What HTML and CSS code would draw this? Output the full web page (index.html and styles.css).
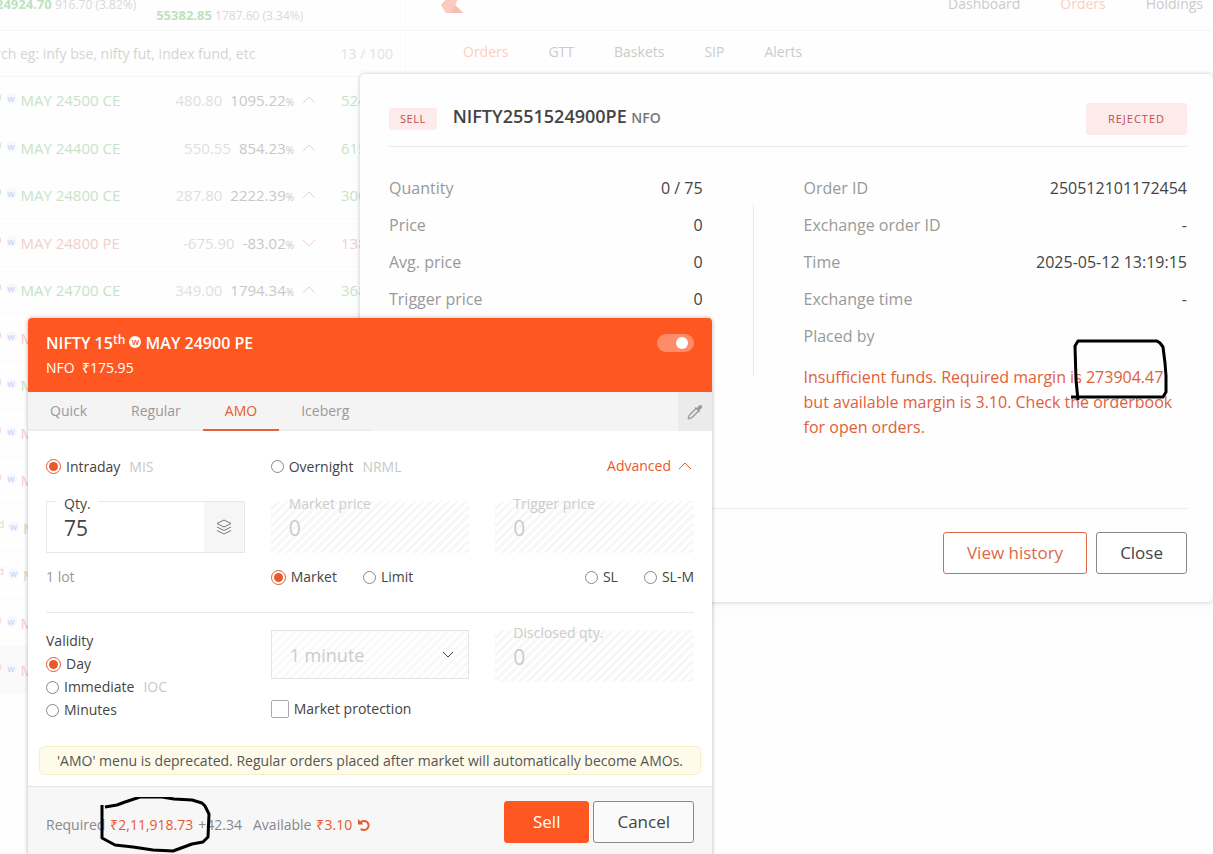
FILE: index.html
```html
<!DOCTYPE html>
<html lang="en">
<head>
    <meta charset="UTF-8">
    <meta name="viewport" content="width=device-width, initial-scale=1.0">
    <title>Orders</title>
    <link rel="stylesheet" href="styles.css">
</head>
<body>
    <div class="app">
        <aside class="sidebar">
            <div class="indices">
                <div class="index"><strong>24924.70</strong> <span>916.70 (3.82%)</span></div>
                <div class="index second"><strong>55382.85</strong> <span>1787.60 (3.34%)</span></div>
            </div>
            <div class="search">
                <input type="text" aria-label="Search" placeholder="Search eg: infy bse, nifty fut, index fund, etc">
                <span>13 / 100</span>
            </div>
            <ul class="watchlist">
                <li class="up">
                    <span class="name">NIFTY 15<sup>th</sup> <i>w</i> MAY 24500 CE</span>
                    <span class="change">480.80</span><span class="percent">1095.22<small>%</small></span>
                    <svg class="chevron" viewBox="0 0 14 8"><path d="M1 7l6-6 6 6"/></svg>
                    <span class="ltp">524</span>
                </li>
                <li class="up">
                    <span class="name">NIFTY 15<sup>th</sup> <i>w</i> MAY 24400 CE</span>
                    <span class="change">550.55</span><span class="percent">854.23<small>%</small></span>
                    <svg class="chevron" viewBox="0 0 14 8"><path d="M1 7l6-6 6 6"/></svg>
                    <span class="ltp">615</span>
                </li>
                <li class="up">
                    <span class="name">NIFTY 15<sup>th</sup> <i>w</i> MAY 24800 CE</span>
                    <span class="change">287.80</span><span class="percent">2222.39<small>%</small></span>
                    <svg class="chevron" viewBox="0 0 14 8"><path d="M1 7l6-6 6 6"/></svg>
                    <span class="ltp">300</span>
                </li>
                <li class="down">
                    <span class="name">NIFTY 15<sup>th</sup> <i>w</i> MAY 24800 PE</span>
                    <span class="change">-675.90</span><span class="percent">-83.02<small>%</small></span>
                    <svg class="chevron" viewBox="0 0 14 8"><path d="M1 1l6 6 6-6"/></svg>
                    <span class="ltp">138</span>
                </li>
                <li class="up">
                    <span class="name">NIFTY 15<sup>th</sup> <i>w</i> MAY 24700 CE</span>
                    <span class="change">349.00</span><span class="percent">1794.34<small>%</small></span>
                    <svg class="chevron" viewBox="0 0 14 8"><path d="M1 7l6-6 6 6"/></svg>
                    <span class="ltp">368</span>
                </li>
                <li class="down"><span class="name">NIFTY 15<sup>th</sup> <i>w</i> MAY</span></li>
                <li class="up"><span class="name">NIFTY 15<sup>th</sup> <i>w</i> MAY</span></li>
                <li class="down"><span class="name">NIFTY 15<sup>th</sup> <i>w</i> MAY</span></li>
                <li class="down"><span class="name">NIFTY 15<sup>th</sup> <i>w</i> MAY</span></li>
                <li class="up"><span class="name">NIFTY 22<sup>nd</sup> <i>w</i> MAY</span></li>
                <li class="down"><span class="name">NIFTY 22<sup>nd</sup> <i>w</i> MAY</span></li>
                <li class="down"><span class="name">NIFTY 15<sup>th</sup> <i>w</i> MAY</span></li>
                <li class="down selected"><span class="name">NIFTY 15<sup>th</sup> <i>w</i> MAY</span></li>
            </ul>
        </aside>
        <main class="main">
            <header class="topbar">
                <svg class="logo" width="24" height="24" viewBox="0 0 24 24">
                    <path d="M8 8h11l-4 8 8 8H6l-5-8z" fill="#fcc9bf"/>
                    <path d="M15 16l8 8H11z" fill="#f9bcb4"/>
                </svg>
                <nav>
                    <a href="#">Dashboard</a>
                    <a href="#" class="active">Orders</a>
                    <a href="#">Holdings</a>
                </nav>
            </header>
            <nav class="subnav">
                <a href="#" class="active">Orders</a>
                <a href="#">GTT</a>
                <a href="#">Baskets</a>
                <a href="#">SIP</a>
                <a href="#">Alerts</a>
            </nav>
        </main>
    </div>

    <section class="modal">
        <header class="modal-header">
            <span class="tag">SELL</span>
            <h2>NIFTY2551524900PE <small>NFO</small></h2>
            <span class="status">REJECTED</span>
        </header>
        <div class="details">
            <dl>
                <div><dt>Quantity</dt><dd>0 / 75</dd></div>
                <div><dt>Price</dt><dd>0</dd></div>
                <div><dt>Avg. price</dt><dd>0</dd></div>
                <div><dt>Trigger price</dt><dd>0</dd></div>
            </dl>
            <div class="separator"></div>
            <div>
                <dl>
                    <div><dt>Order ID</dt><dd>250512101172454</dd></div>
                    <div><dt>Exchange order ID</dt><dd>-</dd></div>
                    <div><dt>Time</dt><dd>2025-05-12 13:19:15</dd></div>
                    <div><dt>Exchange time</dt><dd>-</dd></div>
                    <div><dt>Placed by</dt><dd></dd></div>
                </dl>
                <p class="message">Insufficient funds. Required margin is 273904.47 but available margin is 3.10. Check the orderbook for open orders.</p>
            </div>
        </div>
        <footer class="modal-footer">
            <button type="button" class="btn btn-outline-orange">View history</button>
            <button type="button" class="btn">Close</button>
        </footer>
    </section>

    <form class="order-window">
        <header class="order-header">
            <div>
                <h1>NIFTY 15<sup>th</sup> <i>w</i> MAY 24900 PE</h1>
                <p>NFO&nbsp; ₹175.95</p>
            </div>
            <input type="checkbox" class="toggle" aria-label="Sell" checked>
        </header>
        <div class="tabs">
            <button type="button">Quick</button>
            <button type="button">Regular</button>
            <button type="button" class="active">AMO</button>
            <button type="button">Iceberg</button>
            <button type="button" class="picker" aria-label="Pick">
                <svg width="16" height="16" viewBox="0 0 16 16">
                    <path d="M9 4.500L2.500 11c-.6.700-.5 1.600-1 2.500l-.3.800.6.500.8-.3c.900-.5 1.700-.4 2.400-1L11.500 7" fill="none" stroke="#999" stroke-width="1.300"/>
                    <path d="M7.800 4l1-1 1.100.9 1.900-2.200c.8-.9 2-.9 2.800-.2.800.8.800 2-.1 2.800L12.300 6.200l.9 1.100-1 1z" fill="#999"/>
                </svg>
            </button>
        </div>

        <div class="order-body">
            <div class="grid">
                <label class="option"><input type="radio" name="product" checked> Intraday <span>MIS</span></label>
                <label class="option"><input type="radio" name="product"> Overnight <span>NRML</span></label>
                <a href="#" class="advanced">Advanced <svg width="14" height="8" viewBox="0 0 14 8"><path d="M1 7l6-6 6 6"/></svg></a>
            </div>
            <div class="grid fields">
                <div class="field">
                    <label for="qty">Qty.</label>
                    <input type="text" id="qty" value="75">
                    <button type="button" class="lots" aria-label="Lots">
                        <svg width="16" height="16" viewBox="0 0 16 16">
                            <path d="M8 1l7 3.500L8 8 1 4.500zM1 8l7 3.500L15 8M1 11.500L8 15l7-3.500"/>
                        </svg>
                    </button>
                </div>
                <div class="field disabled">
                    <label for="price">Market price</label>
                    <input type="text" id="price" value="0" disabled>
                </div>
                <div class="field disabled">
                    <label for="trigger">Trigger price</label>
                    <input type="text" id="trigger" value="0" disabled>
                </div>
            </div>
            <div class="grid types">
                <span class="lot">1 lot</span>
                <div class="options">
                    <label class="option"><input type="radio" name="type" checked> Market</label>
                    <label class="option"><input type="radio" name="type"> Limit</label>
                </div>
                <div class="options right">
                    <label class="option"><input type="radio" name="trigger-type"> SL</label>
                    <label class="option"><input type="radio" name="trigger-type"> SL-M</label>
                </div>
            </div>
            <div class="grid more">
                <div class="validity">
                    <span>Validity</span>
                    <label class="option"><input type="radio" name="validity" checked> Day</label>
                    <label class="option"><input type="radio" name="validity"> Immediate <span>IOC</span></label>
                    <label class="option"><input type="radio" name="validity"> Minutes</label>
                </div>
                <div class="protection">
                    <div class="select">
                        <select aria-label="Minutes" disabled><option>1 minute</option></select>
                        <svg width="12" height="8" viewBox="0 0 12 8"><path d="M1 1l5 5 5-5"/></svg>
                    </div>
                    <label class="check"><input type="checkbox"> Market protection</label>
                </div>
                <div class="field disabled">
                    <label for="disclosed">Disclosed qty.</label>
                    <input type="text" id="disclosed" value="0" disabled>
                </div>
            </div>
            <p class="notice">'AMO' menu is deprecated. Regular orders placed after market will automatically become AMOs.</p>
        </div>

        <footer class="order-footer">
            <div class="margins">
                <span>Required</span>
                <span class="orange">₹2,11,918.73</span>
                <span>+42.34</span>
                <span class="available">Available</span>
                <span class="orange">₹3.10</span>
                <button type="button" class="reload" aria-label="Refresh">
                    <svg width="14" height="14" viewBox="0 0 14 14">
                        <path d="M3.500 4.500a4.600 4.600 0 1 1 .3 6.300" fill="none" stroke="#e8592e" stroke-width="2"/>
                        <path d="M1 1v5.500h5.500z" fill="#e8592e"/>
                    </svg>
                </button>
            </div>
            <button type="submit" class="btn btn-sell">Sell</button>
            <button type="button" class="btn">Cancel</button>
        </footer>
    </form>

    <!-- pen marks -->
    <svg class="pen pen-message" width="104" height="68" viewBox="0 0 104 68">
        <path d="M10 64L8 44 7 10l3-5h79l3 2 3 4 2 16 1 13v16l-3 5H3"/>
    </svg>
    <svg class="pen pen-required" width="114" height="57" viewBox="0 0 114 57">
        <path d="M3 8v33l13 7 18 2 20 3 20 1 19-7 11-2 5-5 1-23-4-8-3-3-10-3-18-1-12-2H41l-15 5-8 3-12 2"/>
    </svg>
</body>
</html>
```
FILE: styles.css
```css
* {
    box-sizing: border-box;
}

body {
    position: relative;
    margin: 0;
    min-height: 100vh;
    overflow: hidden;
    font-family: "Open Sans", sans-serif;
    font-size: 14px;
    color: #444;
    background-color: #fefefe;
}

h1, h2, p, ul, dl, dd {
    margin: 0;
    padding: 0;
}

a {
    text-decoration: none;
    color: inherit;
}

button, input, select {
    font: inherit;
    color: inherit;
}

button {
    padding: 0;
    border: none;
    background: none;
    cursor: pointer;
}

svg {
    display: block;
}

/* page behind the dialogs */
.app {
    display: flex;
    margin: -23px 0 0 -80px;
}

.sidebar {
    width: 486px;
    border-right: 1px solid #f9f9f9;
}

.indices {
    display: flex;
    gap: 20px;
    height: 54px;
    padding-left: 76px;
    align-items: center;
    border-bottom: 1px solid #f5f5f5;
    white-space: nowrap;
    font-size: 12px;
    color: #d9d9d9;
}

.index strong {
    font-size: 13px;
    color: #bce3bd;
}

.second {
    padding-top: 22px;
}

.search {
    display: flex;
    height: 46px;
    align-items: center;
    padding: 0 12px 0 52px;
    border-bottom: 1px solid #f7f7f7;
    color: #e3e3e3;
}

.search input {
    flex: 1;
    padding: 0;
    border: none;
    background: none;
}

.search input::placeholder {
    color: #d4d4d4;
}

.watchlist {
    list-style: none;
    font-size: 15px;
}

.watchlist li {
    display: flex;
    height: 47px;
    align-items: center;
    gap: 8px;
    padding-left: 11px;
    border-bottom: 1px solid #fafafa;
    white-space: nowrap;
}

.watchlist li:nth-child(even) {
    height: 48px;
}

.watchlist .selected {
    background-color: #fafafa;
}

.name {
    flex: 1;
}

.name sup {
    font-size: 10px;
    line-height: 1;
}

.name i {
    display: inline-block;
    width: 11px;
    border-radius: 50%;
    background-color: #f7f8ff;
    font-size: 9px;
    line-height: 11px;
    font-style: normal;
    text-align: center;
    vertical-align: 4px;
    color: #c3caf5;
}

.change {
    color: #dedede;
}

.percent {
    color: #c8c8c8;
}

.percent small {
    font-size: 10px;
}

.chevron {
    width: 14px;
    height: 8px;
    fill: none;
    stroke: currentColor;
}

.ltp {
    width: 64px;
    padding-left: 17px;
    box-sizing: content-box;
}

.up {
    color: #c8e2c8;
}

.down {
    color: #f1cfcd;
}

.main {
    flex: 1;
    color: #cbcbcb;
}

.topbar {
    display: flex;
    height: 54px;
    align-items: center;
    justify-content: space-between;
    padding: 0 10px 0 34px;
    border-bottom: 1px solid #f5f5f5;
}

.logo {
    margin-bottom: 6px;
}

.topbar nav {
    display: flex;
    gap: 40px;
}

.subnav {
    display: flex;
    gap: 40px;
    height: 41px;
    padding-left: 57px;
    align-items: center;
}

.main .active {
    color: #fbcfc0;
}

.subnav .active {
    font-weight: 500;
}

/* order details */
.modal {
    position: absolute;
    top: 74px;
    left: 360px;
    right: 0;
    padding: 29px 26px 28px 29px;
    border-radius: 5px;
    background-color: #fefefe;
    box-shadow: 0 0 4px rgba(0, 0, 0, 0.22), 0 8px 20px rgba(0, 0, 0, 0.02);
    font-size: 16px;
}

.modal-header {
    display: flex;
    align-items: center;
    padding-bottom: 11px;
    border-bottom: 1px solid #eaeaea;
}

.tag, .status {
    border-radius: 2px;
    background-color: #fdeaea;
    color: #bd4f4c;
    font-size: 11px;
}

.tag {
    padding: 0 11px;
    line-height: 22px;
    letter-spacing: 0.5px;
}

.status {
    padding: 0 22px;
    border-radius: 3px;
    line-height: 32px;
    letter-spacing: 1px;
}

.modal h2 {
    flex: 1;
    margin-left: 16px;
    font-size: 18px;
    font-weight: 600;
    line-height: 26px;
    padding-bottom: 4px;
}

.modal h2 small {
    font-size: 14px;
    color: #777;
}

.details {
    display: grid;
    grid-template-columns: 314fr 1px 384fr;
    gap: 50px;
    padding-top: 23px;
}

.details dl div {
    display: flex;
    justify-content: space-between;
    line-height: 37px;
}

.details dt {
    color: #999;
}

.separator {
    height: 171px;
    margin-top: 35px;
    background-color: #eaeaea;
}

.message {
    padding: 10px 0 68px;
    line-height: 25px;
    color: #e0603a;
}

.modal-footer {
    display: flex;
    justify-content: flex-end;
    gap: 9px;
    padding-top: 23px;
    border-top: 1px solid #eaeaea;
}

.btn {
    padding: 0 23px;
    border: 1px solid #888;
    border-radius: 3px;
    background-color: #fff;
    font-size: 17px;
    line-height: 40px;
}

.btn-outline-orange {
    border-color: #dc6a47;
    color: #dc6a47;
}

/* order window */
.order-window {
    position: absolute;
    top: 318px;
    left: 28px;
    width: 684px;
    border-radius: 4px 4px 0 0;
    background-color: #fff;
    box-shadow: 0 0 4px rgba(0, 0, 0, 0.3);
}

.order-header {
    display: flex;
    height: 74px;
    justify-content: space-between;
    padding: 12px 18px 0;
    border-radius: 4px 4px 0 0;
    background-color: #ff5722;
    color: #fff;
}

.order-header h1 {
    font-size: 16px;
    font-weight: 600;
    line-height: 26px;
}

.order-header sup {
    font-size: 12px;
    line-height: 1;
    vertical-align: 5px;
}

.order-header i {
    display: inline-block;
    width: 12px;
    border-radius: 50%;
    background-color: #fff;
    font-size: 9px;
    line-height: 12px;
    font-style: normal;
    text-align: center;
    vertical-align: 4px;
    color: #ff5722;
}

.order-header p {
    font-size: 14px;
    font-weight: 500;
    line-height: 24px;
}

.toggle {
    appearance: none;
    width: 37px;
    height: 18px;
    margin: 4px 0 0;
    padding: 3px 6px;
    border-radius: 9px;
    background-color: #ff8c68;
}

.toggle::before {
    content: "";
    display: block;
    width: 12px;
    height: 12px;
    margin-left: auto;
    border-radius: 50%;
    background-color: #fff;
}

.tabs {
    display: flex;
    background-color: #f4f4f4;
    color: #999;
}

.tabs button {
    height: 39px;
    padding: 0 22px;
    border-bottom: 2px solid #ededed;
}

.tabs .active {
    border-color: #e2623f;
    color: #e8592e;
}

.tabs .picker {
    margin-left: auto;
    padding: 0 9px;
    border: none;
    background-color: #ebebeb;
}

.order-body {
    padding: 25px 18px 11px;
}

.grid {
    display: grid;
    grid-template-columns: repeat(3, minmax(0, 1fr));
    gap: 26px;
}

.option {
    display: flex;
    align-items: center;
    gap: 5px;
    line-height: 20px;
}

.option span {
    margin-left: 4px;
    color: #c8c8c8;
}

.option input {
    appearance: none;
    width: 13px;
    height: 13px;
    margin: 0;
    border: 1px solid #888;
    border-radius: 50%;
}

.option input:checked {
    width: 15px;
    height: 15px;
    padding: 2px;
    border-color: #e8592e;
    background: #e8592e content-box;
}

.advanced {
    display: flex;
    align-items: center;
    justify-content: flex-end;
    gap: 7px;
    padding: 0 2px 2px 0;
    color: #e8592e;
}

.advanced svg {
    fill: none;
    stroke: #e8592e;
}

.fields {
    margin-top: 24px;
}

.field {
    position: relative;
    display: flex;
    height: 52px;
    border: 1px solid #e8e8e8;
}

.field label {
    position: absolute;
    top: -8px;
    left: 10px;
    padding: 0 7px;
    background-color: #fff;
    line-height: 20px;
}

.field input {
    flex: 1;
    min-width: 0;
    padding: 2px 17px 0;
    border: none;
    background: none;
    font-size: 21px;
}

.disabled {
    border-color: transparent;
    background: repeating-linear-gradient(135deg, #fff 0 3px, #f7f7f7 3px 6px);
    color: #ccc;
}

.disabled label {
    background: none;
}

.lots {
    width: 40px;
    padding: 0 12px;
    background-color: #f6f6f6;
}

.lots svg {
    fill: none;
    stroke: #777;
}

.types {
    padding: 14px 0 25px;
    border-bottom: 1px solid #e8e8e8;
}

.lot {
    line-height: 20px;
    color: #999;
}

.options {
    display: flex;
    gap: 26px;
}

.right {
    justify-content: flex-end;
}

.more {
    padding-top: 17px;
}

.validity {
    display: grid;
    gap: 3px;
    padding-top: 1px;
    line-height: 20px;
    align-content: start;
}

.select {
    display: flex;
    height: 49px;
    align-items: center;
    padding: 0 14px 0 18px;
    border: 1px solid #e4e4e4;
    background: repeating-linear-gradient(135deg, #fff 0 3px, #f9f9f9 3px 6px);
}

.select select {
    flex: 1;
    appearance: none;
    border: none;
    background: none;
    font-size: 18px;
    color: #ccc;
    opacity: 1;
}

.select svg {
    fill: none;
    stroke: #444;
}

.check {
    display: flex;
    align-items: center;
    gap: 5px;
    margin-top: 20px;
    line-height: 20px;
}

.check input {
    appearance: none;
    width: 18px;
    height: 18px;
    margin: 0;
    border: 1px solid #aaa;
    border-radius: 2px;
}

.notice {
    margin: 26px -7px 0 -7px;
    padding: 0 17px;
    border: 1px solid #f6efc9;
    border-radius: 5px;
    background-color: #fffbea;
    line-height: 27px;
    white-space: nowrap;
    color: #555;
}

.order-footer {
    display: flex;
    align-items: center;
    gap: 4px;
    padding: 14px 18px;
    border-top: 1px solid #e4e4e4;
    background-color: #f7f7f7;
}

.margins {
    display: flex;
    flex: 1;
    align-items: center;
    gap: 5px;
    padding-top: 5px;
    color: #888;
}

.orange {
    color: #e8592e;
}

.available {
    margin-left: 6px;
}

.order-footer .btn {
    background-color: #fafafa;
}

.order-footer .btn-sell {
    padding: 0 28px;
    border-color: #ff5722;
    background-color: #ff5722;
    font-weight: 500;
    color: #fff;
}

.pen {
    position: absolute;
    fill: none;
    stroke: #000;
    stroke-width: 3;
    stroke-linejoin: round;
    pointer-events: none;
}

.pen-message {
    top: 336px;
    left: 1068px;
}

.pen-required {
    top: 797px;
    left: 99px;
}
```
